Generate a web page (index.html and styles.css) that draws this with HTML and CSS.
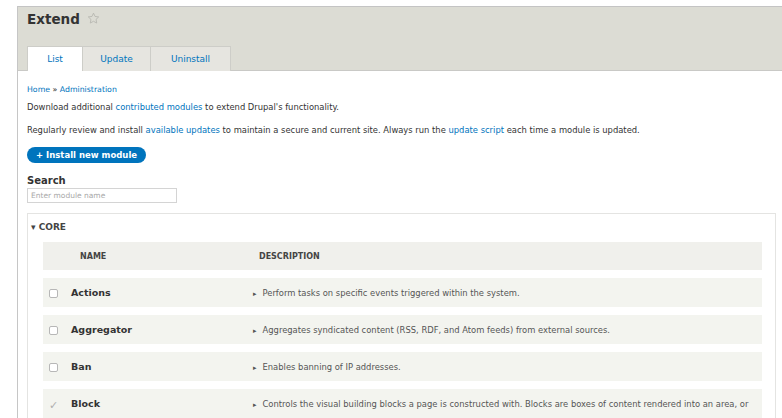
FILE: index.html
```html
<!DOCTYPE html>
<html lang="en">
<head>
<meta charset="utf-8">
<title>Extend</title>
<link rel="stylesheet" href="styles.css">
</head>
<body>
<div class="frame">
  <header class="page-header">
    <h1 class="page-title">Extend <svg class="star" viewBox="0 0 14 14" width="13" height="13"><path d="M7 1.2l1.7 3.6 3.9.5-2.9 2.7.8 3.9L7 10l-3.5 1.9.8-3.9L1.4 5.3l3.9-.5z" fill="none" stroke="#b5b5ae" stroke-width="0.9" stroke-linejoin="round"/></svg></h1>
    <nav class="tabs">
      <a class="tab is-active">List</a>
      <a class="tab">Update</a>
      <a class="tab">Uninstall</a>
    </nav>
  </header>
  <main class="content">
    <div class="breadcrumb"><a>Home</a> » <a>Administration</a></div>
    <p class="help">Download additional <a>contributed modules</a> to extend Drupal's functionality.</p>
    <p class="help">Regularly review and install <a>available updates</a> to maintain a secure and current site. Always run the <a>update script</a> each time a module is updated.</p>
    <a class="button">+ Install new module</a>
    <div class="search">
      <label class="search-label">Search</label>
      <input class="search-input" type="text" placeholder="Enter module name">
    </div>
    <section class="package">
      <div class="package-title">▾ CORE</div>
      <table class="modules">
        <colgroup><col class="col-check"><col class="col-name"><col></colgroup>
        <thead>
          <tr><th></th><th class="name">NAME</th><th class="desc">DESCRIPTION</th></tr>
        </thead>
        <tbody>
          <tr><td class="check"><span class="box"></span></td><td class="name">Actions</td><td class="desc"><span class="arrow">▸</span>Perform tasks on specific events triggered within the system.</td></tr>
          <tr><td class="check"><span class="box"></span></td><td class="name">Aggregator</td><td class="desc"><span class="arrow">▸</span>Aggregates syndicated content (RSS, RDF, and Atom feeds) from external sources.</td></tr>
          <tr><td class="check"><span class="box"></span></td><td class="name">Ban</td><td class="desc"><span class="arrow">▸</span>Enables banning of IP addresses.</td></tr>
          <tr><td class="check"><span class="tick">✓</span></td><td class="name">Block</td><td class="desc"><span class="arrow">▸</span>Controls the visual building blocks a page is constructed with. Blocks are boxes of content rendered into an area, or</td></tr>
        </tbody>
      </table>
    </section>
  </main>
</div>
</body>
</html>
```
FILE: styles.css
```css
html, body {
  margin: 0;
  padding: 0;
  background: #fff;
  overflow: hidden;
}

body {
  font-family: "DejaVu Sans", "Open Sans", sans-serif;
  color: #333;
  height: 418px;
}

a {
  color: #0074bd;
  text-decoration: none;
}

.frame {
  margin: 6px 0 0 17px;
  border-left: 1px solid #c6c6c6;
  min-height: 420px;
}

/* Grey title band with the tab row sitting on its bottom edge */
.page-header {
  background: #dcdcd4;
  border-top: 1px solid #c4c4c4;
  border-bottom: 1px solid #c9c9c6;
  padding: 2px 0 0 9px;
}

.page-title {
  margin: 0;
  font-size: 13.5px;
  font-weight: bold;
  line-height: 20px;
  color: #333;
  display: flex;
  align-items: center;
  gap: 7px;
}

.star {
  display: block;
  margin-top: -1px;
}

.tabs {
  display: flex;
  margin-top: 17px;
  margin-bottom: -1px;
}

.tab {
  display: block;
  height: 25px;
  line-height: 25px;
  font-size: 9px;
  text-align: center;
  background: #e6e5e0;
  border: 1px solid #cdcdc8;
  border-bottom: none;
  border-left: none;
  box-sizing: border-box;
}

.tab:first-child {
  border-left: 1px solid #cdcdc8;
}

.tab.is-active {
  background: #fff;
  width: 56px;
}

.tab:nth-child(2) { width: 68px; }
.tab:nth-child(3) { width: 80px; }

.content {
  padding: 13px 6px 0 9px;
}

.breadcrumb {
  font-size: 7.8px;
  line-height: 11px;
}

.help {
  margin: 6px 0 0;
  font-size: 8.4px;
  line-height: 12px;
}

.help + .help {
  margin-top: 11px;
}

.button {
  display: inline-block;
  margin-top: 11px;
  height: 16px;
  line-height: 16px;
  padding: 0 9px;
  border-radius: 9px;
  background: #0074bd;
  color: #fff;
  font-size: 8.5px;
  font-weight: bold;
}

.search {
  margin-top: 12px;
}

.search-label {
  display: block;
  font-size: 10px;
  font-weight: bold;
  line-height: 12px;
}

.search-input {
  display: block;
  margin: 1px 0 0;
  width: 150px;
  height: 15px;
  box-sizing: border-box;
  border: 1px solid #d4d4d4;
  padding: 0 3px;
  font-family: inherit;
  font-size: 7.5px;
  color: #999;
}

.search-input::placeholder {
  color: #a8a8a8;
}

.package {
  margin-top: 10px;
  border: 1px solid #e4e4e2;
  border-bottom: none;
  padding: 7px 13px 0 15px;
}

.package-title {
  margin-left: -12px;
  font-size: 9px;
  font-weight: bold;
  line-height: 12px;
  color: #444;
}

.modules {
  width: 100%;
  table-layout: fixed;
  margin-top: 1px;
  border-collapse: separate;
  border-spacing: 0 8px;
}

.modules col.col-check { width: 28px; }
.modules col.col-name { width: 180px; }

.modules th,
.modules td {
  height: 29px;
  padding: 0;
  text-align: left;
  vertical-align: middle;
}

.modules thead th {
  height: 28px;
  background: #f0f0ec;
  font-size: 8px;
  font-weight: bold;
  color: #444;
}

.modules tbody td {
  background: #f3f4ef;
}

.modules thead .name {
  padding-left: 9px;
}

.modules thead .desc {
  padding-left: 8px;
}

.modules tbody .name {
  font-size: 9.5px;
  font-weight: bold;
  color: #333;
}

.modules tbody .desc {
  padding-left: 2px;
  font-size: 8.4px;
  color: #555;
  white-space: nowrap;
  overflow: hidden;
}

.modules .check {
  padding-left: 6px;
}

.arrow {
  font-size: 7px;
  margin-right: 6px;
  color: #555;
}

.box {
  display: inline-block;
  width: 7px;
  height: 7px;
  border: 1px solid #b7b7b7;
  border-radius: 2px;
  background: #fff;
  vertical-align: middle;
}

.tick {
  font-size: 11px;
  color: #b0b0b0;
}
```
